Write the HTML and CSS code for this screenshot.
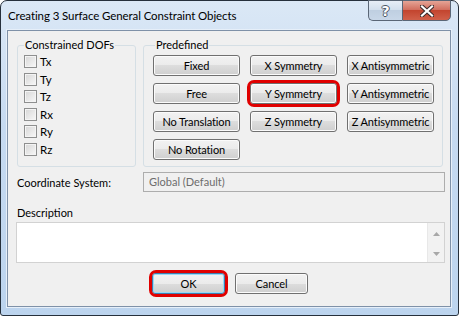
FILE: index.html
```html
<!DOCTYPE html>
<html lang="en">
<head>
  <meta charset="UTF-8">
  <meta name="viewport" content="width=device-width, initial-scale=1.0">
  <title>Creating 3 Surface General Constraint Objects</title>
  <link rel="stylesheet" href="styles.css">
</head>
<body>
  <div class="window">
    <div class="titlebar">
      <span class="title">Creating 3 Surface General Constraint Objects</span>
      <div class="caption-buttons">
        <span class="cap-btn help">?</span>
        <span class="cap-btn close">
          <svg width="14" height="12" viewBox="0 0 14 12">
            <path d="M2 1.5 L12 10.5 M12 1.5 L2 10.5" stroke="#3a2a2a" stroke-width="4.2" stroke-linecap="square"/>
            <path d="M2 1.5 L12 10.5 M12 1.5 L2 10.5" stroke="#ffffff" stroke-width="2.2" stroke-linecap="square"/>
          </svg>
        </span>
      </div>
    </div>

    <div class="client">
      <div class="groups">
        <fieldset class="group dofs">
          <legend>Constrained DOFs</legend>
          <label class="check"><span class="box"></span>Tx</label>
          <label class="check"><span class="box"></span>Ty</label>
          <label class="check"><span class="box"></span>Tz</label>
          <label class="check"><span class="box"></span>Rx</label>
          <label class="check"><span class="box"></span>Ry</label>
          <label class="check"><span class="box"></span>Rz</label>
        </fieldset>

        <fieldset class="group predefined">
          <legend>Predefined</legend>
          <div class="button-grid">
            <button class="btn">Fixed</button>
            <button class="btn">X Symmetry</button>
            <button class="btn">X Antisymmetric</button>
            <button class="btn">Free</button>
            <button class="btn marked">Y Symmetry</button>
            <button class="btn">Y Antisymmetric</button>
            <button class="btn">No Translation</button>
            <button class="btn">Z Symmetry</button>
            <button class="btn">Z Antisymmetric</button>
            <button class="btn">No Rotation</button>
          </div>
        </fieldset>
      </div>

      <div class="field-row">
        <span class="field-label">Coordinate System:</span>
        <div class="combo">Global (Default)</div>
      </div>

      <div class="desc-label">Description</div>
      <div class="memo">
        <div class="memo-text"></div>
        <div class="memo-scroll">
          <svg width="7" height="4" viewBox="0 0 7 4"><path d="M0 4 L3.5 0 L7 4 Z" fill="#a8a8a8"/></svg>
          <svg width="7" height="4" viewBox="0 0 7 4"><path d="M0 0 L3.5 4 L7 0 Z" fill="#a8a8a8"/></svg>
        </div>
      </div>

      <div class="actions">
        <button class="btn dialog default marked">OK</button>
        <button class="btn dialog">Cancel</button>
      </div>
    </div>
  </div>
</body>
</html>
```

FILE: styles.css
```css
* {
  box-sizing: border-box;
}
body {
  margin: 0;
  background-color: #ffffff;
  font-family: Lato, "Open Sans", sans-serif;
  font-size: 11px;
  color: #000;
}
.window {
  width: 459px;
  height: 316px;
  border: 1px solid #26303c;
  border-radius: 7px 7px 3px 3px;
  background: linear-gradient(#dbe8f6, #c6daf1 40%, #bcd4ee);
  padding: 0 7px 8px 6px;
  display: flex;
  flex-direction: column;
}
.titlebar {
  height: 29px;
  display: flex;
  justify-content: space-between;
  align-items: flex-start;
}
.title {
  font-size: 11.5px;
  letter-spacing: -0.1px;
  padding: 8px 0 0 1px;
  color: #000;
}
.caption-buttons {
  display: flex;
  margin-top: -1px;
}
.cap-btn {
  height: 21px;
  display: flex;
  align-items: center;
  justify-content: center;
  border: 1px solid #5a6676;
}
.help {
  width: 34px;
  border-right: none;
  border-radius: 0 0 0 5px;
  background: linear-gradient(#e7eef7, #d3e0ee 45%, #bfcfe1 50%, #c8d7e8);
  color: #fff;
  font-family: "DejaVu Sans", sans-serif;
  font-weight: bold;
  font-size: 14px;
  text-shadow: 1px 0 #4a5564, -1px 0 #4a5564, 0 1px #4a5564, 0 -1px #4a5564;
}
.close {
  width: 49px;
  border-radius: 0 0 5px 0;
  background: linear-gradient(#e5a496, #d27060 45%, #c3452f 50%, #d0604a);
}
.client {
  flex: 1;
  background-color: #f0f0f0;
  border: 1px solid #7f91a8;
  box-shadow: 0 0 0 1px #e6eff9;
  padding: 7px 7px 0 9px;
  display: flex;
  flex-direction: column;
}
.groups {
  display: flex;
  gap: 7px;
  height: 129px;
}
.group {
  margin: 0;
  border: 1px solid #d5dfe5;
  border-radius: 3px;
  min-width: 0;
}
.group legend {
  padding: 0 1px;
  line-height: 14px;
}
.dofs {
  width: 119px;
  padding: 1px 6px 0 6px;
}
.predefined {
  flex: 1;
  padding: 3px 8px 6px 9px;
}
.predefined legend {
  margin-left: 2px;
}
.check {
  display: flex;
  align-items: center;
  height: 17.5px;
  gap: 3px;
  font-size: 11.5px;
}
.box {
  width: 13px;
  height: 13px;
  border: 1px solid #8e8f8f;
  background: linear-gradient(135deg, #d6d6d6, #f8f8f8);
  box-shadow: inset 0 0 0 1px #f4f4f4;
}
.button-grid {
  display: grid;
  grid-template-columns: repeat(3, 87px);
  grid-auto-rows: 21px;
  column-gap: 10px;
  row-gap: 7px;
}
.btn {
  font-family: inherit;
  font-size: 11px;
  letter-spacing: -0.1px;
  color: #000;
  padding: 0;
  border: 1px solid #707070;
  border-radius: 3px;
  background: linear-gradient(#f2f2f2, #ebebeb 50%, #dddddd 50%, #cfcfcf);
  box-shadow: inset 0 0 0 1px #fbfbfb;
  position: relative;
}
.marked::after {
  content: "";
  position: absolute;
  left: -4px;
  right: -4px;
  top: -4px;
  bottom: -4px;
  border: 3px solid #e00000;
  border-radius: 7px;
}
.field-row {
  display: flex;
  align-items: center;
  margin-top: 5px;
  margin-right: -2px;
}
.field-label {
  width: 126px;
}
.combo {
  flex: 1;
  height: 20px;
  border: 1px solid #adadad;
  background-color: #f0f0f0;
  color: #6d6d6d;
  padding: 2px 5px;
  line-height: 14px;
}
.desc-label {
  margin-top: 14px;
  line-height: 14px;
}
.memo {
  margin: 2px -2px 0 -1px;
  height: 41px;
  border: 1px solid #d2d2d2;
  background-color: #fff;
  display: flex;
}
.memo-text {
  flex: 1;
}
.memo-scroll {
  width: 17px;
  background-color: #f2f2f2;
  border-left: 1px solid #e8e8e8;
  display: flex;
  flex-direction: column;
  justify-content: space-between;
  align-items: center;
  padding: 9px 0 6px;
}
.actions {
  display: flex;
  justify-content: center;
  gap: 10px;
  margin-top: 10px;
}
.dialog {
  width: 73px;
  height: 21px;
}
.default {
  border-color: #3c7fb1;
  box-shadow: inset 0 0 0 1px #9ad9f6;
}
```
